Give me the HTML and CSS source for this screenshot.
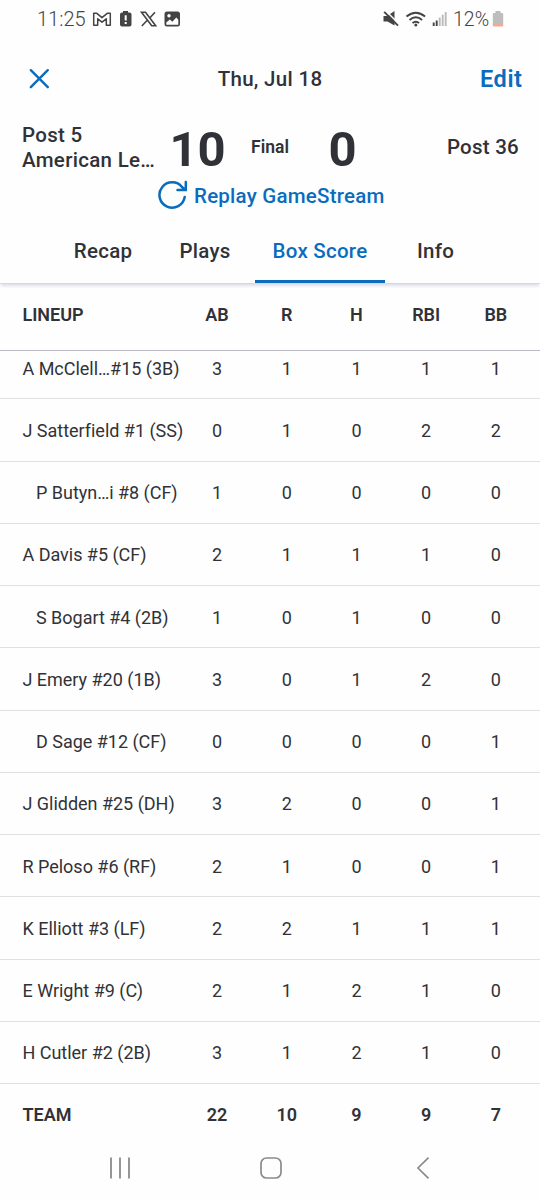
FILE: index.html
```html
<!DOCTYPE html>
<html lang="en">
<head>
<meta charset="utf-8">
<title>Box Score</title>
<link rel="stylesheet" href="styles.css">
</head>
<body>
<div class="screen">
  <div class="status">
    <span class="clock">11:25</span>
    <svg class="ico-notes" width="90" height="20" viewBox="0 0 90 20">
      <path d="M1.700 16.300V4.200H4.500L10 8.700 15.500 4.200H18.300V16.300H14.300V9.800L10 13.200 5.700 9.800V16.300Z" fill="#fff" stroke="#444" stroke-width="1.500" stroke-linejoin="round"/>
      <path d="M31 2h5v1.500h1.500a2 2 0 0 1 2 2V15.500a2 2 0 0 1-2 2h-7.500a2 2 0 0 1-2-2V5.500a2 2 0 0 1 2-2h1z" fill="#444"/>
      <path d="M33.700 6.300v5.200M33.700 13v2" stroke="#fff" stroke-width="2"/>
      <path d="M49.500 3.200h4L63.700 16.800h-4zM63 3.200L57.500 9.300M55.300 11.300L49.800 17" fill="none" stroke="#444" stroke-width="1.600"/>
      <rect x="72.500" y="2.500" width="15.500" height="15" rx="2.500" fill="#444"/>
      <path d="M74.300 13.500l3.500-3 2.500 2.300 4-4.300 2 2.200v5H74.300z" fill="#fff"/><circle cx="77" cy="6.800" r="1.700" fill="#fff"/>
    </svg>
    <svg class="ico-system" width="66" height="20" viewBox="0 0 66 20">
      <path d="M1.500 7h3.500L12.500 2v14.500L5.500 12.500H1.500z" fill="#444"/>
      <path d="M3.500 1.500L17 15" stroke="#fff" stroke-width="1.500"/>
      <path d="M2.200 2.800L16 16.700" stroke="#444" stroke-width="1.900"/>
      <path d="M24.500 7.600Q33.800-.2 43.100 7.600M27.500 11Q33.800 5.600 40.100 11M30.500 14Q33.800 11.400 37.100 14" fill="none" stroke="#444" stroke-width="1.900"/>
      <circle cx="33.800" cy="16" r="1.500" fill="#444"/>
      <path d="M51.700 13.500V17M54.700 11.500V17" stroke="#444" stroke-width="1.900"/>
      <path d="M57.700 8.500V17M60.700 5.700V17M63.700 3V17" stroke="#bbb" stroke-width="1.900"/>
    </svg>
    <span class="percent">12%</span>
    <svg class="ico-battery" width="12" height="18" viewBox="0 0 12 18">
      <path d="M3.500 1h5v2H10a1.200 1.200 0 0 1 1.200 1.200V13H.8V4.200A1.200 1.200 0 0 1 2 3h1.500z" fill="#bdbdbd"/>
      <path d="M.8 13h10.400v2.200a1.200 1.200 0 0 1-1.200 1.200H2a1.200 1.200 0 0 1-1.200-1.200z" fill="#f2a896"/>
    </svg>
  </div>

  <header class="topbar">
    <svg class="close" width="22" height="22" viewBox="0 0 22 22"><path d="M2.800 2.200l17 17M19.800 2.200l-17 17" stroke="#0a6cbd" stroke-width="2.400" stroke-linecap="round"/></svg>
    <span class="date">Thu, Jul 18</span>
    <span class="edit">Edit</span>
  </header>

  <section class="score">
    <div class="away"><div>Post 5</div><div>American Le…</div></div>
    <div class="runs left">10</div>
    <div class="final">Final</div>
    <div class="runs">0</div>
    <div class="home">Post 36</div>
  </section>

  <div class="replay">
    <svg width="32" height="32" viewBox="0 0 32 32"><path d="M27.700 18A12.700 12.700 0 1 1 25.200 8.200L28 11M28.800 3V11H20.500" fill="none" stroke="#0a6cbd" stroke-width="2.500" stroke-linecap="round"/></svg>
    <span>Replay GameStream</span>
  </div>

  <nav class="tabs">
    <span class="tab recap">Recap</span>
    <span class="tab plays">Plays</span>
    <span class="tab active">Box Score</span>
    <span class="tab info">Info</span>
  </nav>

  <div class="row head"><span>LINEUP</span><b>AB</b><b>R</b><b>H</b><b>RBI</b><b>BB</b></div>
  <main class="list">
    <div class="row first"><span>A McClell…#15 (3B)</span><b>3</b><b>1</b><b>1</b><b>1</b><b>1</b></div>
    <div class="row"><span>J Satterfield #1 (SS)</span><b>0</b><b>1</b><b>0</b><b>2</b><b>2</b></div>
    <div class="row"><span class="sub">P Butyn…i #8 (CF)</span><b>1</b><b>0</b><b>0</b><b>0</b><b>0</b></div>
    <div class="row"><span>A Davis #5 (CF)</span><b>2</b><b>1</b><b>1</b><b>1</b><b>0</b></div>
    <div class="row"><span class="sub">S Bogart #4 (2B)</span><b>1</b><b>0</b><b>1</b><b>0</b><b>0</b></div>
    <div class="row"><span>J Emery #20 (1B)</span><b>3</b><b>0</b><b>1</b><b>2</b><b>0</b></div>
    <div class="row"><span class="sub">D Sage #12 (CF)</span><b>0</b><b>0</b><b>0</b><b>0</b><b>1</b></div>
    <div class="row"><span>J Glidden #25 (DH)</span><b>3</b><b>2</b><b>0</b><b>0</b><b>1</b></div>
    <div class="row"><span>R Peloso #6 (RF)</span><b>2</b><b>1</b><b>0</b><b>0</b><b>1</b></div>
    <div class="row"><span>K Elliott #3 (LF)</span><b>2</b><b>2</b><b>1</b><b>1</b><b>1</b></div>
    <div class="row"><span>E Wright #9 (C)</span><b>2</b><b>1</b><b>2</b><b>1</b><b>0</b></div>
    <div class="row"><span>H Cutler #2 (2B)</span><b>3</b><b>1</b><b>2</b><b>1</b><b>0</b></div>
    <div class="row team"><span>TEAM</span><b>22</b><b>10</b><b>9</b><b>9</b><b>7</b></div>
  </main>

  <footer class="sysnav">
    <svg width="22" height="22" viewBox="0 0 22 22"><path d="M2 .5v21M11 .5v21M20 .5v21" stroke="#8b8b8b" stroke-width="1.800"/></svg>
    <svg width="22" height="22" viewBox="0 0 22 22"><rect x="1" y="1" width="20" height="20" rx="5.500" fill="none" stroke="#8b8b8b" stroke-width="1.700"/></svg>
    <svg width="14" height="22" viewBox="0 0 14 22"><path d="M12.500 .7L2 11l10.500 10.300" fill="none" stroke="#8b8b8b" stroke-width="1.700"/></svg>
  </footer>
</div>
</body>
</html>
```
FILE: styles.css
```css
* { box-sizing: border-box; }
body { margin: 0; background: #fefefe; font-family: Roboto, sans-serif; color: #313238; }
.screen { width: 540px; height: 1200px; overflow: hidden; display: flex; flex-direction: column; }
.screen > * { flex: none; white-space: nowrap; }
svg { flex: none; }

.status { height: 38px; display: flex; align-items: center; padding: 0 36px 0 37px; color: #444; font-size: 20px; }
.clock { width: 55px; font-size: 20px; font-weight: 350; }
.ico-system { margin-left: auto; margin-right: 5px; }
.percent { width: 39px; font-size: 19.5px; font-weight: 350; }

.topbar { height: 80px; display: grid; grid-template-columns: 100px 1fr 100px; align-items: center; padding: 1px 18px 0 28px; }
.date { text-align: center; font-size: 20.5px; font-weight: 480; margin-left: -10px; letter-spacing: 0.3px; }
.edit { text-align: right; font-size: 23.5px; font-weight: 600; color: #0a6cbd; letter-spacing: 0.6px; margin-right: -0.6px; padding-top: 1px; }

.score { height: 58px; display: grid; grid-template-columns: 147px 59px 84px 61px 1fr; align-items: center; padding: 0 21px 0 22px; font-size: 20.5px; font-weight: 470; }
.away { line-height: 25px; letter-spacing: 0.3px; margin-top: -2px; }
.runs { text-align: center; font-size: 49px; font-weight: 700; line-height: 58px; padding-top: 3px; }
.left { margin-left: -2px; }
.final { text-align: center; font-size: 17.5px; font-weight: 600; margin-top: -4px; }
.home { text-align: right; letter-spacing: 0.25px; margin-top: -4px; }

.replay { height: 39px; display: flex; align-items: center; gap: 5px; padding-left: 157px; padding-top: 1px; color: #0a6cbd; font-size: 20.5px; font-weight: 500; letter-spacing: 0.23px; }
.replay svg { margin-top: -3px; }

.tabs { height: 69px; display: flex; padding-left: 54px; border-bottom: 1px solid #d5d7e2; box-shadow: 0 3px 3px -1px #dcdde9; font-size: 20.5px; font-weight: 480; letter-spacing: 0.25px; }
.tab { display: flex; align-items: center; justify-content: center; padding-top: 3px; height: 68px; }
.recap { width: 98px; }
.plays { width: 106px; margin-right: -3px; }
.active { width: 130px; color: #0a6cbd; border-bottom: 3px solid #0a6cbd; padding-top: 6px; }
.info { width: 101px; }

.row { height: 62.25px; display: grid; grid-template-columns: 159.500px repeat(5, 69.7px); align-items: center; padding-top: 1px; padding-left: 22.500px; border-bottom: 1px solid #e1e1e4; font-size: 18px; }
.row b { font-weight: 380; text-align: center; padding-left: 0.500px; }
.row span { font-weight: 380; letter-spacing: -0.02px; }
.row .sub { padding-left: 13.500px; }
.head { height: 67px; padding-top: 0; padding-bottom: 6px; border-color: #b9bac6; }
.head b, .team b, .head span, .team span { font-weight: 600; }
.list { overflow: hidden; }
.first { margin-top: -14px; }
.team { border: 0; padding-top: 0; padding-bottom: 1px; }

.sysnav { height: 44px; display: flex; align-items: center; padding-left: 109px; }
.sysnav svg { margin-right: 129px; }
.sysnav svg:nth-child(2) { margin-right: 134px; }
```
